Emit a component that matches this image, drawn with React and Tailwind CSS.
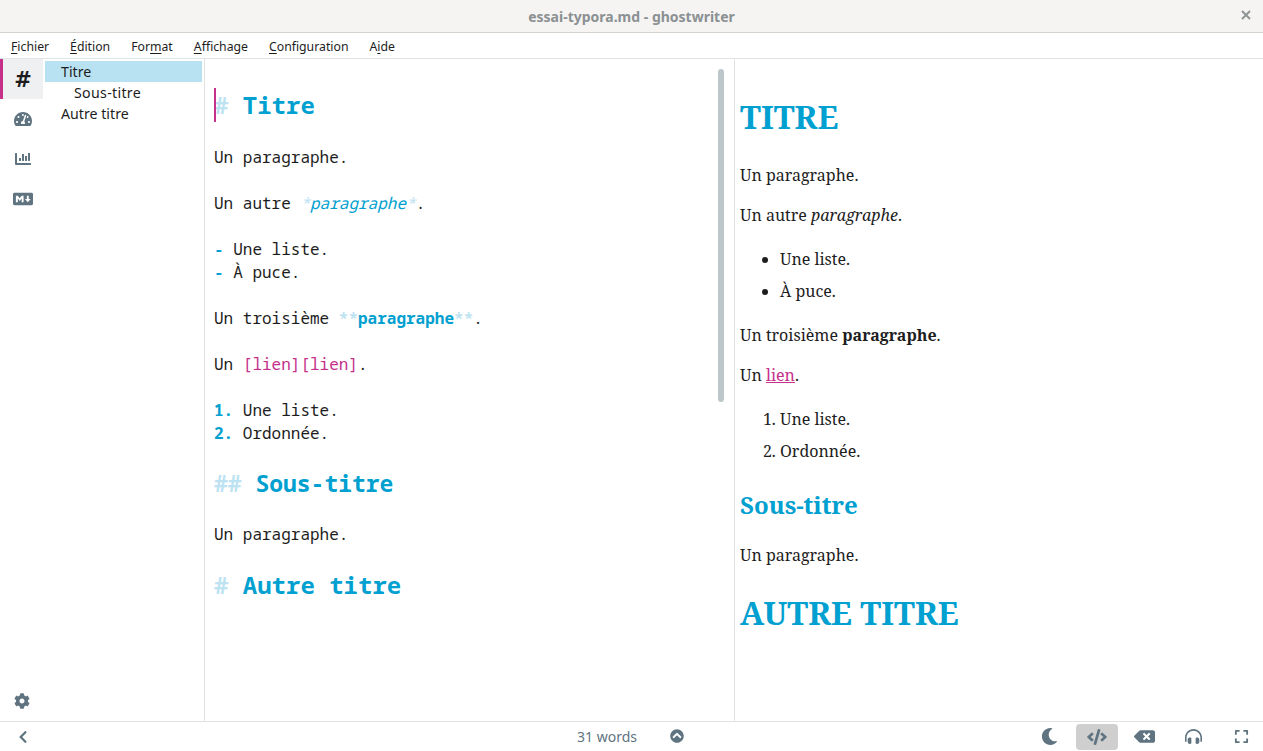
import {
  FaBackspace,
  FaChartBar,
  FaChevronCircleUp,
  FaChevronLeft,
  FaCode,
  FaCog,
  FaExpand,
  FaHeadphonesAlt,
  FaMarkdown,
  FaMoon,
  FaTachometerAlt,
} from "react-icons/fa";

const Mark = ({ children }) => <span className="text-[#bde3f2]">{children}</span>;
const Key = ({ children }) => <span className="underline underline-offset-2">{children}</span>;

const menus = [
  [<Key key="f">F</Key>, "ichier"],
  [<Key key="e">É</Key>, "dition"],
  ["For", <Key key="m">m</Key>, "at"],
  [<Key key="a">A</Key>, "ffichage"],
  [<Key key="c">C</Key>, "onfiguration"],
  ["A", <Key key="i">i</Key>, "de"],
];

const Line = ({ className = "", children }) => (
  <div className={`h-[23px] leading-[23px] whitespace-pre ${className}`}>{children}</div>
);

const Editor = () => (
  <div className="relative flex-1 min-w-0 border-r border-[#dfe3e4] pl-[9px] pt-[29px] font-['Noto_Sans_Mono','DejaVu_Sans_Mono',monospace] text-[16px] text-[#1d1d1d]">
    <div className="absolute left-[9px] top-[29px] h-[34px] w-[2px] bg-[#c5308b]" />
    <div className="h-[34px] leading-[34px] text-[24px] font-bold text-[#00a0d0] whitespace-pre">
      <Mark># </Mark>Titre
    </div>
    <Line className="mt-[24px]">Un paragraphe.</Line>
    <Line className="mt-[23px]">
      Un autre <span className="italic text-[#00a0d0]"><Mark>*</Mark>paragraphe<Mark>*</Mark></span>.
    </Line>
    <Line className="mt-[23px]"><span className="text-[#00a0d0] font-bold">- </span>Une liste.</Line>
    <Line><span className="text-[#00a0d0] font-bold">- </span>À puce.</Line>
    <Line className="mt-[23px]">
      Un troisième <span className="font-bold text-[#00a0d0]"><Mark>**</Mark>paragraphe<Mark>**</Mark></span>.
    </Line>
    <Line className="mt-[23px]">Un <span className="text-[#c5308b]">[lien][lien]</span>.</Line>
    <Line className="mt-[23px]"><span className="text-[#00a0d0] font-bold">1. </span>Une liste.</Line>
    <Line><span className="text-[#00a0d0] font-bold">2. </span>Ordonnée.</Line>
    <div className="mt-[22px] h-[32px] leading-[32px] text-[23px] font-bold text-[#00a0d0] whitespace-pre">
      <Mark>## </Mark>Sous-titre
    </div>
    <Line className="mt-[24px]">Un paragraphe.</Line>
    <div className="mt-[22px] h-[34px] leading-[34px] text-[24px] font-bold text-[#00a0d0] whitespace-pre">
      <Mark># </Mark>Autre titre
    </div>
    <div className="absolute right-[10px] top-[10px] h-[333px] w-[6px] rounded-full bg-[#bdc7c9]" />
  </div>
);

const Preview = () => (
  <div className="w-[528px] shrink-0 pl-[5px] pt-[35px] font-['Noto_Serif','DejaVu_Serif',serif] text-[16px] text-[#1d1d1d]">
    <h1 className="h-[46px] leading-[46px] text-[32px] font-bold text-[#00a0d0]">TITRE</h1>
    <p className="mt-[23px] h-[24px] leading-[24px]">Un paragraphe.</p>
    <p className="mt-[16px] h-[24px] leading-[24px]">
      Un autre <em>paragraphe</em>.
    </p>
    <ul className="mt-[20px] list-disc pl-[40px]">
      <li className="h-[24px] leading-[24px]">Une liste.</li>
      <li className="mt-[8px] h-[24px] leading-[24px]">À puce.</li>
    </ul>
    <p className="mt-[20px] h-[24px] leading-[24px]">
      Un troisième <strong>paragraphe</strong>.
    </p>
    <p className="mt-[16px] h-[24px] leading-[24px]">
      Un <span className="text-[#c5308b] underline">lien</span>.
    </p>
    <ol className="mt-[20px] list-decimal pl-[40px]">
      <li className="h-[24px] leading-[24px]">Une liste.</li>
      <li className="mt-[8px] h-[24px] leading-[24px]">Ordonnée.</li>
    </ol>
    <h2 className="mt-[24px] h-[36px] leading-[36px] text-[24px] font-bold text-[#00a0d0]">Sous-titre</h2>
    <p className="mt-[20px] h-[24px] leading-[24px]">Un paragraphe.</p>
    <h1 className="mt-[23px] h-[46px] leading-[46px] text-[32px] font-bold text-[#00a0d0]">AUTRE TITRE</h1>
  </div>
);

const App = () => {
  return (
    <div className="flex h-[751px] w-[1263px] flex-col overflow-hidden bg-white font-['Noto_Sans',sans-serif] text-[#1d1d1d]">
      {/* title bar */}
      <div className="relative flex h-[33px] shrink-0 items-center justify-center border-b border-[#d5d1cd] bg-[#f5f4f2] text-[14px] font-bold text-[#8b9092]">
        essai-typora.md - ghostwriter
        <svg className="absolute right-[12px] top-[10px]" width="10" height="10" viewBox="0 0 10 10">
          <path d="M1 1l8 8M9 1l-8 8" stroke="#8f9394" strokeWidth="2" />
        </svg>
      </div>

      {/* menu bar */}
      <div className="flex h-[26px] shrink-0 items-center gap-[21px] border-b border-[#dfe3e4] pl-[11px] pt-[3px] text-[12.25px]">
        {menus.map((m, i) => (
          <span key={i}>{m}</span>
        ))}
      </div>

      <div className="flex min-h-0 flex-1 border-b border-[#dfe3e4]">
        {/* icon rail */}
        <div className="mr-[2px] flex w-[43px] shrink-0 flex-col items-center text-[#5f7480]">
          <div className="flex h-[40px] w-full items-center justify-center border-l-[3px] border-[#c5308b] bg-[#eff0f1] pt-[4px] text-[21px] font-bold text-[#1d1d1d] font-['DejaVu_Sans',sans-serif]">
            #
          </div>
          <div className="flex h-[40px] items-center justify-center pl-[3px]"><FaTachometerAlt size={18} className="-mt-[1px]" /></div>
          <div className="flex h-[40px] items-center justify-center pl-[3px]"><FaChartBar size={16} className="-mt-[1px]" /></div>
          <div className="flex h-[40px] items-center justify-center pl-[3px]"><FaMarkdown size={20} className="-mt-[1px]" /></div>
          <div className="mt-auto flex h-[40px] items-center justify-center"><FaCog size={16} /></div>
        </div>

        {/* outline */}
        <div className="w-[160px] shrink-0 border-r border-[#dfe3e4] pt-[2px] pr-[2px] text-[14.2px]">
          <div className="h-[21px] bg-[#b8e2f2] pl-[16px] leading-[21px]">Titre</div>
          <div className="h-[21px] pl-[29px] leading-[21px] tracking-[0.3px]">Sous-titre</div>
          <div className="h-[21px] pl-[16px] leading-[21px]">Autre titre</div>
        </div>

        <Editor />
        <Preview />
      </div>

      {/* status bar */}
      <div className="relative flex h-[29px] shrink-0 items-center text-[#5f7480]">
        <FaChevronLeft size={14} className="ml-[16px]" />
        <span className="absolute left-[577px] top-[5px] text-[14px] leading-[20px]">31 words</span>
        <FaChevronCircleUp size={14} className="absolute left-[670px] top-[7px]" />
        <div className="ml-auto flex items-center pr-[14px]">
          <FaMoon size={17} className="mr-[18px]" />
          <div className="flex h-[26px] w-[42px] items-center justify-center rounded-[4px] bg-[#cfcfcf]">
            <FaCode size={20} />
          </div>
          <FaBackspace size={21} className="ml-[16px]" />
          <FaHeadphonesAlt size={17} className="ml-[30px]" />
          <FaExpand size={15} className="ml-[32px]" />
        </div>
      </div>
    </div>
  );
};

export default App;
